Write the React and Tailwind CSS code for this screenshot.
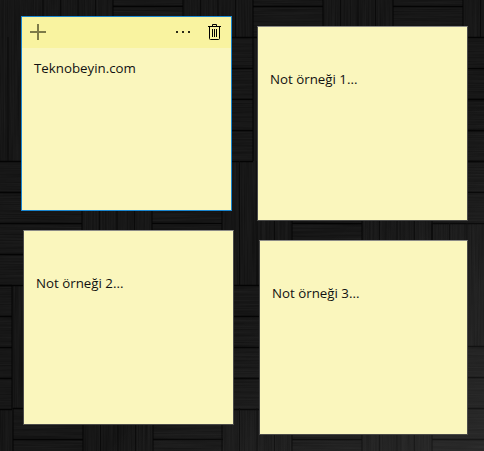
import React from 'react';

// wallpaper blocks: [x, y, horizontal slats?]
const blocks = [
  [43, -87, 0], [113, -87, 1], [183, -87, 0], [253, -87, 1], [323, -87, 0], [393, -87, 1], [463, -87, 0],
  [-27, 37, 0], [43, 37, 1], [113, 37, 0], [183, 37, 1], [253, 37, 0], [323, 37, 1], [393, 37, 0], [463, 37, 1],
  [-58, 161, 1], [12, 161, 1], [82, 161, 0], [152, 161, 1], [222, 161, 0], [292, 161, 1], [362, 161, 0], [432, 99, 1],
  [12, 285, 0], [82, 285, 1], [152, 285, 0], [222, 285, 1], [292, 285, 0], [362, 285, 1], [432, 223, 0], [-58, 285, 1],
  [-57, 408, 0], [13, 408, 1], [83, 408, 0], [153, 408, 1], [222, 408, 0], [292, 408, 1], [362, 408, 0], [432, 346, 1],
];

const Wallpaper = () => (
  <svg className="absolute inset-0" width="484" height="451" viewBox="0 0 484 451">
    <defs>
      <filter id="grainV" x="0" y="0" width="100%" height="100%">
        <feTurbulence type="fractalNoise" baseFrequency="0.7 0.015" numOctaves="2" seed="4" />
        <feColorMatrix values="0 0 0 0 1  0 0 0 0 1  0 0 0 0 1  0.07 0 0 0 -0.015" />
      </filter>
      <filter id="grainH" x="0" y="0" width="100%" height="100%">
        <feTurbulence type="fractalNoise" baseFrequency="0.015 0.7" numOctaves="2" seed="9" />
        <feColorMatrix values="0 0 0 0 1  0 0 0 0 1  0 0 0 0 1  0.07 0 0 0 -0.015" />
      </filter>
      <linearGradient id="glow" x1="0" y1="0" x2="1" y2="1">
        <stop offset="0.6" stopColor="#fff" stopOpacity="0" />
        <stop offset="1" stopColor="#fff" stopOpacity="0.08" />
      </linearGradient>
    </defs>
    <rect width="484" height="451" fill="#121212" />
    <rect width="484" height="451" filter="url(#grainV)" />
    {blocks.filter((b) => b[2]).map(([x, y], i) => (
      <rect key={i} x={x} y={y} width="70" height="124" fill="#121212" />
    ))}
    <rect width="484" height="451" filter="url(#grainH)" clipPath="url(#horizontalBlocks)" />
    <clipPath id="horizontalBlocks">
      {blocks.filter((b) => b[2]).map(([x, y], i) => (
        <rect key={i} x={x} y={y} width="70" height="124" />
      ))}
    </clipPath>
    {blocks.map(([x, y, horizontal], i) => (
      <g key={i}>
        {horizontal
          ? [0, 31, 62, 93, 124].map((d) => (
              <line key={d} x1={x} x2={x + 70} y1={y + d + 0.5} y2={y + d + 0.5} stroke="#040404" strokeWidth="1.5" />
            ))
          : [0, 17.5, 35, 52.5, 70].map((d) => (
              <line key={d} x1={x + d} x2={x + d} y1={y} y2={y + 124} stroke={d % 70 ? '#0a0a0a' : '#050505'} />
            ))}
      </g>
    ))}
    <rect width="484" height="451" fill="url(#glow)" />
  </svg>
);

const PlusIcon = () => (
  <svg width="16" height="16" viewBox="0 0 16 16" className="shrink-0">
    <path d="M8 0v16M0 8h16" stroke="#7d7a48" strokeWidth="2" fill="none" />
  </svg>
);

const DotsIcon = () => (
  <svg width="14" height="2" viewBox="0 0 14 2" className="shrink-0">
    <path d="M0 0h2v2H0zM6 0h2v2H6zM12 0h2v2h-2z" fill="#2b2a18" />
  </svg>
);

const TrashIcon = () => (
  <svg width="13" height="16" viewBox="0 0 13 16" className="shrink-0">
    <path
      d="M0 2.5h13M4.5 2.5V.5h4v2M1.5 2.5v12q0 1 1 1h8q1 0 1-1v-12M4.5 5v8M6.5 5v8M8.5 5v8"
      stroke="#000"
      strokeWidth="1"
      fill="none"
    />
  </svg>
);

const App = () => {
  return (
    <div className="relative w-[484px] h-[451px] overflow-hidden bg-[#121212] text-[13.3px] leading-5 text-[#111] font-['Open_Sans','Liberation_Sans',sans-serif]">
      <Wallpaper />

      {/* active note with its toolbar */}
      <div className="absolute left-[21px] top-[16px] w-[211px] h-[195px] bg-[#faf6bd] border border-[#1a86d0]">
        <div className="flex items-start h-[31px] pt-[7px] pl-2 pr-[10px] bg-[#f9f3a0]">
          <PlusIcon />
          <div className="flex items-center h-4 ml-auto gap-[18px]">
            <DotsIcon />
            <TrashIcon />
          </div>
        </div>
        <p className="pt-[10px] pl-3">Teknobeyin.com</p>
      </div>

      {/* inactive notes */}
      <div className="absolute left-[257px] top-[26px] w-[211px] h-[195px] bg-[#faf6bd] border border-[#4a4a48] border-t-[#8a8a86]">
        <p className="pt-[42px] pl-3">Not örneği 1...</p>
      </div>
      <div className="absolute left-[23px] top-[230px] w-[211px] h-[195px] bg-[#faf6bd] border border-[#4a4a48] border-t-[#8a8a86]">
        <p className="pt-[42px] pl-3">Not örneği 2...</p>
      </div>
      <div className="absolute left-[259px] top-[240px] w-[209px] h-[195px] bg-[#faf6bd] border border-[#4a4a48] border-t-[#8a8a86]">
        <p className="pt-[42px] pl-3">Not örneği 3...</p>
      </div>
    </div>
  );
};

export default App;
